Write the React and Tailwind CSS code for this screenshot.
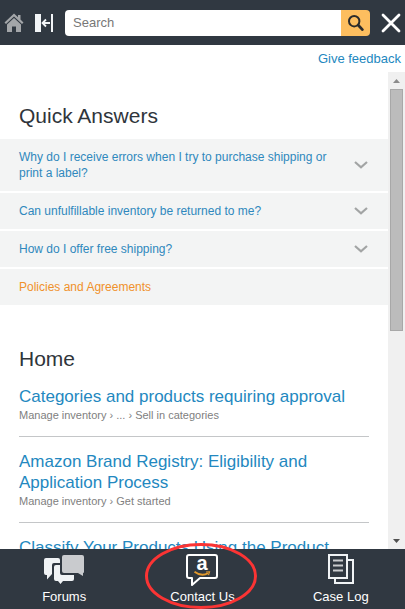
import { useState } from "react";

const questions = [
  "Why do I receive errors when I try to purchase shipping or print a label?",
  "Can unfulfillable inventory be returned to me?",
  "How do I offer free shipping?",
];

const articles = [
  {
    title: "Categories and products requiring approval",
    path: "Manage inventory › ... › Sell in categories",
  },
  {
    title: "Amazon Brand Registry: Eligibility and Application Process",
    path: "Manage inventory › Get started",
  },
  {
    title: "Classify Your Products Using the Product",
  },
];

function HomeIcon() {
  return (
    <svg width="20" height="20" viewBox="0 0 20 20">
      <path d="M10 0.5L0.5 9.5L2 11L10 3.6L18 11L19.5 9.5L16.5 6.6V2H14V4.3Z" fill="#a3a6a9" />
      <path d="M10 5L3 11.5V19H8V13.5H12V19H17V11.5Z" fill="#a3a6a9" />
    </svg>
  );
}

function CollapseIcon() {
  return (
    <svg width="18" height="18" viewBox="0 0 18 18">
      <rect x="0" y="0" width="6" height="18" fill="#f2f5f7" />
      <rect x="16" y="0" width="2" height="18" fill="#f2f5f7" />
      <path d="M15 9H8M11 5.5L7.5 9L11 12.5" fill="none" stroke="#f2f5f7" strokeWidth="1.8" />
    </svg>
  );
}

function SearchIcon() {
  return (
    <svg width="18" height="18" viewBox="0 0 18 18" fill="none" stroke="#2b2b2b">
      <circle cx="7.2" cy="7.2" r="5.2" strokeWidth="2" />
      <path d="M11.3 11.3L15.4 15.6" strokeWidth="2.8" strokeLinecap="round" />
    </svg>
  );
}

function CloseIcon() {
  return (
    <svg width="20" height="20" viewBox="0 0 20 20">
      <path d="M2 2L18 18M18 2L2 18" stroke="#fff" strokeWidth="2.8" strokeLinecap="round" />
    </svg>
  );
}

function ChevronIcon() {
  return (
    <svg width="14" height="8" viewBox="0 0 14 8" className="shrink-0">
      <path d="M1 1L7 6.3L13 1" fill="none" stroke="#a2a4a4" strokeWidth="2.2" />
    </svg>
  );
}

function ForumsIcon() {
  return (
    <svg width="40" height="30" viewBox="0 0 40 30">
      <path d="M2 4H14Q16 4 16 6V9H10Q8 9 8 11V20L3 25.5V21H2Q0 21 0 19V6Q0 4 2 4Z" fill="#f0f3f5" />
      <path d="M12 11H16V19Q16 21 18 21H30V25Q30 27 28 27H19L16.5 30L14 27H12Q10 27 10 25V13Q10 11 12 11Z" fill="#f0f3f5" />
      <path d="M20 1H38Q40 1 40 3V18Q40 19 39 19V22L34 19H20Q18 19 18 17V3Q18 1 20 1Z" fill="#c9cbce" />
    </svg>
  );
}

function ContactIcon() {
  return (
    <svg width="32" height="32" viewBox="0 0 32 32">
      <path
        d="M3 1H29Q31 1 31 3V22Q31 24 29 24H14L6 31V24H3Q1 24 1 22V3Q1 1 3 1Z"
        fill="none"
        stroke="#fff"
        strokeWidth="2"
        strokeLinejoin="round"
      />
      <text x="16" y="16" textAnchor="middle" fontSize="20" fontWeight="bold" fill="#fff" fontFamily="Liberation Sans, sans-serif">
        a
      </text>
      <path d="M8.5 17.8Q15.5 23 22 19.2" fill="none" stroke="#e39a2d" strokeWidth="1.9" />
      <path d="M20 18L23.5 17.8L22.5 21.2" fill="none" stroke="#e39a2d" strokeWidth="1.2" />
    </svg>
  );
}

function CaseLogIcon() {
  return (
    <svg width="26" height="30" viewBox="0 0 26 30" fill="none" stroke="#f0f3f5" strokeWidth="2">
      <path d="M1 1H19V24H1Z" />
      <path d="M20 6H25V29H7V24" />
      <path d="M5 6.5H15M5 11.5H15M5 16.5H15" stroke="#c9cbce" />
    </svg>
  );
}

function Header() {
  const [query, setQuery] = useState("");

  return (
    <header className="flex h-[45px] shrink-0 items-center bg-[#303841] px-1">
      <button type="button" aria-label="Home">
        <HomeIcon />
      </button>
      <button type="button" aria-label="Collapse" className="ml-[11px]">
        <CollapseIcon />
      </button>
      <form className="ml-3 flex h-[26px] min-w-0 flex-1 overflow-hidden rounded" onSubmit={(e) => e.preventDefault()}>
        <input
          type="text"
          aria-label="Search"
          placeholder="Search"
          value={query}
          onChange={(e) => setQuery(e.target.value)}
          className="min-w-0 flex-1 bg-white px-2 text-[13px] text-[#333] outline-none placeholder:text-[#777]"
        />
        <button type="submit" aria-label="Submit search" className="flex w-[29px] items-center justify-center bg-[#fdbe5f]">
          <SearchIcon />
        </button>
      </form>
      <button type="button" aria-label="Close" className="ml-[11px]">
        <CloseIcon />
      </button>
    </header>
  );
}

function QuickAnswers() {
  return (
    <section>
      <h2 className="px-[19px] pt-8 pb-[11px] text-[21px] leading-6 text-[#2f353b]">Quick Answers</h2>
      <ul className="flex flex-col gap-0.5 text-[12px] leading-4">
        {questions.map((question) => (
          <li key={question}>
            <button
              type="button"
              className="flex w-full items-center justify-between gap-5 bg-[#f3f4f4] py-2.5 pr-5 pl-[19px] text-left text-[#2f88bd]"
            >
              <span>{question}</span>
              <ChevronIcon />
            </button>
          </li>
        ))}
        <li className="bg-[#f3f4f4] px-[19px] py-2.5">
          <a href="#policies" className="block text-[#f0912b]">
            Policies and Agreements
          </a>
        </li>
      </ul>
    </section>
  );
}

function Articles() {
  return (
    <section className="px-[19px] pt-[42px]">
      <h2 className="pb-px text-[21px] leading-6 text-[#2f353b]">Home</h2>
      {articles.map((article) => (
        <article key={article.title} className="border-b border-[#c4c6c8] pt-3.5 pb-[13px]">
          <a href="#article" className="block text-[17px] leading-[21px] text-[#2388c0]">
            {article.title}
          </a>
          {article.path && <p className="text-[11px] leading-4 text-[#808080]">{article.path}</p>}
        </article>
      ))}
    </section>
  );
}

function ScrollTrack() {
  return (
    <div className="flex w-[17px] shrink-0 flex-col items-center bg-[#f0f0f0]">
      <div className="flex h-[17px] items-center">
        <svg width="7" height="4" viewBox="0 0 7 4">
          <path d="M0 4L3.5 0L7 4Z" fill="#8b8b8b" />
        </svg>
      </div>
      <div className="min-h-0 w-full flex-1 px-0.5">
        <div className="h-6/11 border border-[#a8a8a8] bg-[#bcbcbc]" />
      </div>
      <div className="flex h-[17px] items-center">
        <svg width="7" height="4" viewBox="0 0 7 4">
          <path d="M0 0L3.5 4L7 0Z" fill="#505050" />
        </svg>
      </div>
    </div>
  );
}

function Footer() {
  return (
    <footer className="grid h-[60px] shrink-0 grid-cols-3 gap-2.5 bg-[#303841] text-[13px] leading-4 text-white">
      <button type="button" className="flex flex-col items-center pt-[5px]">
        <span className="flex h-[35px] items-start">
          <ForumsIcon />
        </span>
        Forums
      </button>
      <button type="button" className="relative flex flex-col items-center pt-[5px]">
        <span className="flex h-[35px] items-start">
          <ContactIcon />
        </span>
        Contact Us
        {/* highlight ring around the contact button */}
        <svg
          width="114"
          height="66"
          viewBox="0 0 114 66"
          className="pointer-events-none absolute bottom-0 left-1/2 -translate-x-1/2"
        >
          <ellipse cx="56" cy="33" rx="54.5" ry="31.5" fill="none" stroke="#fb3434" strokeWidth="3" />
        </svg>
      </button>
      <button type="button" className="flex flex-col items-center pt-[5px]">
        <span className="flex h-[35px] items-start">
          <CaseLogIcon />
        </span>
        Case Log
      </button>
    </footer>
  );
}

function App() {
  return (
    <div className="flex h-screen flex-col bg-white font-['Liberation_Sans',Arial,sans-serif]">
      <Header />
      <div className="flex h-[27px] shrink-0 items-center justify-end pr-1">
        <a href="#feedback" className="text-[13px] leading-4 text-[#2388c0]">
          Give feedback
        </a>
      </div>
      <div className="flex min-h-0 flex-1">
        <main className="min-w-0 flex-1 overflow-hidden">
          <QuickAnswers />
          <Articles />
        </main>
        <ScrollTrack />
      </div>
      <Footer />
    </div>
  );
}

export default App;
